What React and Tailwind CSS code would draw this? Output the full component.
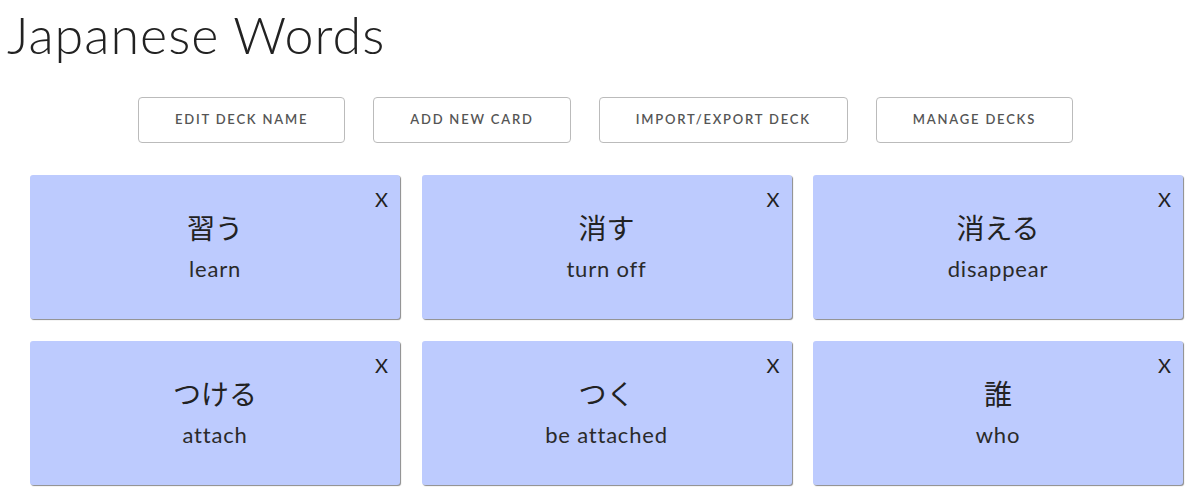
const cards = [
  { word: '習う', meaning: 'learn' },
  { word: '消す', meaning: 'turn off' },
  { word: '消える', meaning: 'disappear' },
  { word: 'つける', meaning: 'attach' },
  { word: 'つく', meaning: 'be attached' },
  { word: '誰', meaning: 'who' },
];

const buttons = ['Edit deck name', 'Add new card', 'Import/Export deck', 'Manage decks'];

const App = () => {
  return (
    <div className="min-h-screen bg-white text-[#222] font-['Lato','Noto_Sans_CJK_JP',sans-serif]">
      <h1 className="pl-[7px] pt-[2px] text-[52px] leading-[64px] font-light tracking-[1px]">Japanese Words</h1>

      <div className="flex justify-center gap-[28px] pl-[15px] mt-[31px]">
        {buttons.map(b => (
          <button
            key={b}
            className="h-[46px] px-[36px] border border-[#bbb] rounded-[4px] bg-white text-[13px] font-semibold tracking-[1.8px] uppercase text-[#555]"
          >
            {b}
          </button>
        ))}
      </div>

      <div className="grid grid-cols-3 gap-x-[21.5px] gap-y-[22px] w-[1153px] ml-[30px] mt-[32px]">
        {cards.map(c => (
          <div key={c.word} className="relative h-[144px] bg-[#bdcbfe] rounded-[3px] shadow-[1px_1px_1px_#8a8a8a] flex flex-col items-center pt-[32px]">
            <span className="absolute top-[12px] right-[12px] text-[20px] leading-[24px] text-[#222]">X</span>
            <p className="text-[28px] leading-[40px] font-['Noto_Sans_CJK_JP',sans-serif]">{c.word}</p>
            <p className="text-[22px] leading-[30px] mt-[7px] tracking-[0.8px] text-[#2a2a2a]">{c.meaning}</p>
          </div>
        ))}
      </div>
    </div>
  );
};

export default App;
